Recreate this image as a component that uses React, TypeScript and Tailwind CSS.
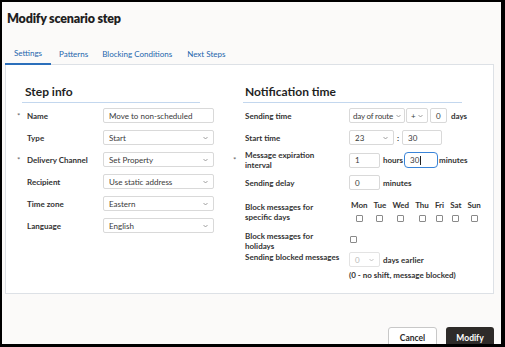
import React from 'react';

const Chevron: React.FC<{ light?: boolean }> = ({ light }) => (
  <svg width="5" height="4" viewBox="0 0 5 4" className="shrink-0">
    <polyline points="0.5,1 2.5,3 4.5,1" fill="none" stroke={light ? '#b5b5b5' : '#888'} strokeWidth="0.8" />
  </svg>
);

const Select: React.FC<{ value: string; w: string; disabled?: boolean; px?: string; extra?: string }> = ({
  value,
  w,
  disabled,
  px = 'px-[5px]',
  extra = '',
}) => (
  <div
    className={`${w} ${px} h-[15px] flex items-center justify-between border rounded-[2px] bg-white text-[8px] whitespace-nowrap ${
      disabled ? 'border-[#e3e3e3] text-[#b9b9b9]' : 'border-[#d9d9d9] text-[#3a3a3a]'
    }`}
  >
    <span className={extra}>{value}</span>
    <Chevron light={disabled} />
  </div>
);

const Input: React.FC<{ value: string; w: string }> = ({ value, w }) => (
  <div className={`${w} h-[15px] flex items-center px-[5px] border border-[#d9d9d9] rounded-[2px] bg-white text-[8px] text-[#3a3a3a]`}>
    {value}
  </div>
);

const Label: React.FC<{ text: React.ReactNode; req?: boolean; w: string; bw: string }> = ({ text, req, w, bw }) => (
  <>
    <span className={`${bw} shrink-0 text-[8px] text-[#666] leading-none`}>{req ? '*' : ''}</span>
    <span className={`${w} shrink-0 text-[8px] font-bold text-[#333] leading-[10px]`}>{text}</span>
  </>
);

const Checkbox: React.FC = () => (
  <div className="w-[7px] h-[7px] border border-[#8a8a8a] rounded-[1px] bg-white" />
);

const days = ['Mon', 'Tue', 'Wed', 'Thu', 'Fri', 'Sat', 'Sun'];

const leftRows = [
  { label: 'Name', req: true, value: 'Move to non-scheduled', select: false },
  { label: 'Type', req: false, value: 'Start', select: true },
  { label: 'Delivery Channel', req: true, value: 'Set Property', select: true },
  { label: 'Recipient', req: false, value: 'Use static address', select: true },
  { label: 'Time zone', req: false, value: 'Eastern', select: true },
  { label: 'Language', req: false, value: 'English', select: true },
];

const App: React.FC = () => {
  return (
    <div className="w-[505px] h-[347px] overflow-hidden border-l-2 border-t-2 border-r-4 border-b-[3px] border-black bg-[#fbfaf9] font-['Lato',sans-serif] text-[#2b2b2b]">
      <h1 className="pl-[5px] pt-[7px] text-[12.5px] leading-[20px] font-extrabold tracking-[-0.2px] text-[#1f1f1f]">Modify scenario step</h1>

      {/* tabs */}
      <div className="ml-[3px] mr-[7px] mt-[14px] flex h-[22px] border-b border-[#dde1e6] text-[8px] text-[#2466ad]">
        <div className="px-[9px] flex items-center border-b-2 border-[#2b6fbb] -mb-px">Settings</div>
        <div className="px-[8px] flex items-center">Patterns</div>
        <div className="pl-[6px] pr-[7px] flex items-center">Blocking Conditions</div>
        <div className="px-[8px] flex items-center">Next Steps</div>
      </div>

      {/* card */}
      <div className="ml-[3px] mr-[7px] h-[229px] border border-t-0 border-[#dde1e6] bg-white flex pl-[11px] pt-[19px]">
        {/* left column */}
        <div className="w-[197px] shrink-0">
          <div className="ml-[5px] w-[178px] pl-[3px] pb-[2px] border-b border-[#c3d7ee] text-[12px] leading-[16px] font-bold text-[#1f1f1f]">
            Step info
          </div>
          <div className="mt-[5px] flex flex-col gap-[7px]">
            {leftRows.map(r => (
              <div key={r.label} className="flex items-center h-[15px]">
                <Label text={r.label} req={r.req} w="w-[76px]" bw="w-[10px]" />
                {r.select ? <Select value={r.value} w="w-[111px]" /> : <Input value={r.value} w="w-[111px]" />}
              </div>
            ))}
          </div>
        </div>

        {/* right column */}
        <div className="ml-[19px] w-[240px] shrink-0">
          <div className="ml-[10px] w-[219px] pl-[2px] pb-[2px] border-b border-[#c3d7ee] text-[12px] leading-[16px] font-bold text-[#1f1f1f]">
            Notification time
          </div>
          <div className="mt-[5px] flex flex-col">
            <div className="flex items-center h-[15px]">
              <Label text="Sending time" w="w-[104px]" bw="w-[12px]" />
              <Select value="day of route" w="w-[56px]" px="px-[3px]" extra="tracking-[-0.2px]" />
              <div className="ml-[1px]"><Select value="+" w="w-[22px]" px="px-[4px]" /></div>
              <div className="ml-[2px]"><Input value="0" w="w-[17px]" /></div>
              <span className="ml-[4px] text-[8px] font-bold text-[#333]">days</span>
            </div>

            <div className="flex items-center h-[15px] mt-[7px]">
              <Label text="Start time" w="w-[104px]" bw="w-[12px]" />
              <Select value="23" w="w-[45px]" />
              <span className="w-[8px] text-center text-[8px] font-bold text-[#333]">:</span>
              <Input value="30" w="w-[40px]" />
            </div>

            <div className="flex items-center h-[20px] mt-[5px]">
              <Label text={<>Message expiration<br />interval</>} req w="w-[104px]" bw="w-[12px]" />
              <Input value="1" w="w-[31px]" />
              <span className="ml-[3px] text-[8px] font-bold text-[#333]">hours</span>
              <div className="ml-[1px] w-[34px] h-[16px] flex items-center px-[5px] border-[1.5px] border-[#3a84d8] rounded-[4px] bg-white text-[8px] text-[#3a3a3a]">
                30<span className="ml-px w-px h-[9px] bg-[#222]" />
              </div>
              <span className="ml-[1px] text-[8px] font-bold text-[#333]">minutes</span>
            </div>

            <div className="flex items-center h-[15px] mt-[5px]">
              <Label text="Sending delay" w="w-[104px]" bw="w-[12px]" />
              <Input value="0" w="w-[31px]" />
              <span className="ml-[3px] text-[8px] font-bold text-[#333]">minutes</span>
            </div>

            <div className="flex items-start mt-[10px]">
              <span className="w-[12px] shrink-0" />
              <span className="w-[106px] shrink-0 pt-[2px] text-[8px] font-bold text-[#333] leading-[10px]">
                Block messages for<br />specific days
              </span>
              <div className="flex gap-[6px]">
                {days.map(d => (
                  <div key={d} className="flex flex-col items-center">
                    <span className="text-[8px] leading-[10px] font-bold text-[#333]">{d}</span>
                    <div className="mt-[5px]"><Checkbox /></div>
                  </div>
                ))}
              </div>
            </div>

            <div className="flex items-center mt-[9px]">
              <Label text={<>Block messages for<br />holidays</>} w="w-[104px]" bw="w-[12px]" />
              <div className="-mt-[3px] ml-[1px]"><Checkbox /></div>
            </div>

            <div className="flex items-start mt-[1px]">
              <Label text="Sending blocked messages" w="w-[104px]" bw="w-[12px]" />
              <div className="flex flex-col">
                <div className="flex items-center">
                  <Select value="0" w="w-[31px]" disabled />
                  <span className="ml-[3px] text-[8px] font-bold text-[#333]">days earlier</span>
                </div>
                <span className="mt-[3px] text-[8px] leading-[10px] font-bold text-[#333]">(0 - no shift, message blocked)</span>
              </div>
            </div>
          </div>
        </div>
      </div>

      {/* footer */}
      <div className="mr-[7px] mt-[33px] flex justify-end gap-[9px]">
        <button className="w-[49px] h-[22px] border border-[#c8c8c8] rounded-[3px] bg-white text-[8.5px] font-bold text-[#2b2b2b]">
          Cancel
        </button>
        <button className="w-[48px] h-[22px] rounded-[3px] bg-[#2e2b29] text-[8.5px] font-bold text-white">
          Modify
        </button>
      </div>
    </div>
  );
};

export default App;
